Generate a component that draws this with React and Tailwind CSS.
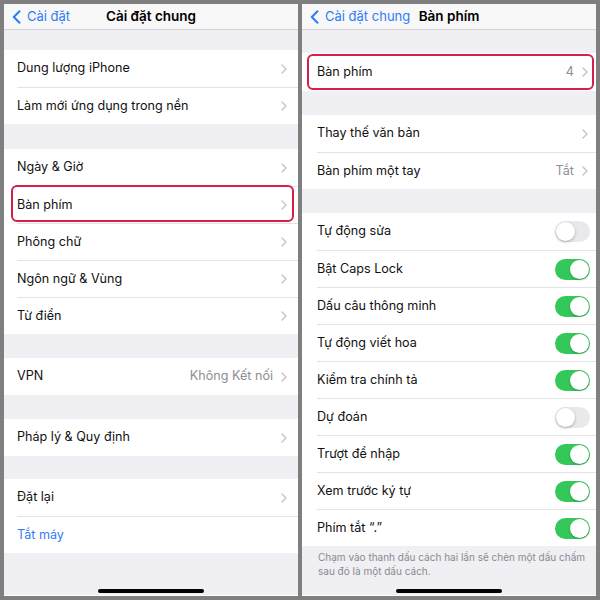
import React from 'react';

const font = { fontFamily: 'Inter, "Noto Sans", sans-serif' };

function Chevron() {
  return (
    <svg width="6" height="10" viewBox="0 0 6 10" className="shrink-0">
      <path d="M1 1l4 4-4 4" fill="none" stroke="#c4c4c7" strokeWidth="1.4" strokeLinecap="round" strokeLinejoin="round" />
    </svg>
  );
}

function BackChevron() {
  return (
    <svg width="9" height="14" viewBox="0 0 9 14" className="shrink-0">
      <path d="M7.5 1.2L1.8 7l5.7 5.8" fill="none" stroke="#2f7cf6" strokeWidth="2" strokeLinecap="round" strokeLinejoin="round" />
    </svg>
  );
}

function Toggle({ on }) {
  return on ? (
    <div className="w-[35px] h-[21px] rounded-full bg-[#34c759] flex items-center justify-end pr-[1px] shrink-0">
      <div className="w-[19px] h-[19px] rounded-full bg-white shadow-[0_1px_2px_rgba(0,0,0,0.25)]" />
    </div>
  ) : (
    <div className="w-[35px] h-[21px] rounded-full bg-[#e9e9eb] flex items-center pl-[1px] shrink-0">
      <div className="w-[19px] h-[19px] rounded-full bg-white shadow-[0_1px_3px_rgba(0,0,0,0.3)]" />
    </div>
  );
}

function Row({ label, value, chevron = true, toggle, first, inset, blue, highlight, h = 'h-[37px]', pr = 'pr-[11px]' }) {
  return (
    <div className={`relative ${h} flex`} style={{ paddingLeft: inset }}>
      <div className={`flex-1 flex items-center ${pr} ${first ? '' : 'border-t border-[#e3e3e6]'}`}>
        <span className={`flex-1 text-[12.6px] ${blue ? 'text-[#2f7cf6]' : 'text-[#111]'}`}>{label}</span>
        {value && <span className="text-[12.6px] text-[#8e8e93] mr-[8px]">{value}</span>}
        {toggle !== undefined ? <Toggle on={toggle} /> : chevron && <Chevron />}
      </div>
      {highlight}
    </div>
  );
}

function Nav({ back, title }) {
  return (
    <div className="relative h-[26px] bg-[#f8f8f8] border-b border-[#d4d4d8] flex items-center shrink-0">
      <div className="flex items-center gap-[6px] pl-[8px] text-[13px] text-[#2f7cf6] z-10">
        <BackChevron />
        <span>{back}</span>
      </div>
      <div className="absolute inset-0 flex items-center justify-center text-[13.5px] font-semibold text-black">{title}</div>
    </div>
  );
}

function Group({ children }) {
  return <div className="bg-white">{children}</div>;
}

function HomeBar() {
  return (
    <div className="mt-auto flex justify-center pb-[2px]">
      <div className="w-[106px] h-[4px] rounded-full bg-black" />
    </div>
  );
}

function LeftPanel() {
  const ins = 13;
  return (
    <div className="w-[294px] h-[592px] bg-[#efeff4] flex flex-col border-b border-white">
      <Nav back="Cài đặt" title="Cài đặt chung" />
      <div className="h-[20px]" />
      <Group>
        <Row first inset={ins} label="Dung lượng iPhone" />
        <Row inset={ins} label="Làm mới ứng dụng trong nền" />
      </Group>
      <div className="h-[25px]" />
      <Group>
        <Row first inset={ins} label="Ngày & Giờ" />
        <Row
          inset={ins}
          label="Bàn phím"
          highlight={<div className="absolute left-[7px] right-[4px] top-[-1px] bottom-[1px] border-2 border-[#d81e48] rounded-[6px]" />}
        />
        <Row inset={ins} label="Phông chữ" />
        <Row inset={ins} label="Ngôn ngữ & Vùng" />
        <Row inset={ins} label="Từ điển" />
      </Group>
      <div className="h-[24px]" />
      <Group>
        <Row first inset={ins} label="VPN" value="Không Kết nối" />
      </Group>
      <div className="h-[24px]" />
      <Group>
        <Row first inset={ins} label="Pháp lý & Quy định" />
      </Group>
      <div className="h-[23px]" />
      <Group>
        <Row first inset={ins} label="Đặt lại" />
        <Row inset={ins} label="Tắt máy" chevron={false} blue />
      </Group>
      <HomeBar />
    </div>
  );
}

function RightPanel() {
  const ins = 15;
  const pr = 'pr-[8px]';
  const tpr = 'pr-[6px]';
  const toggles = [
    ['Tự động sửa', false],
    ['Bật Caps Lock', true],
    ['Dấu câu thông minh', true],
    ['Tự động viết hoa', true],
    ['Kiểm tra chính tả', true],
    ['Dự đoán', false],
    ['Trượt để nhập', true],
    ['Xem trước ký tự', true],
    ['Phím tắt “.”', true],
  ];
  return (
    <div className="w-[294px] h-[592px] bg-[#efeff4] flex flex-col border-b border-white">
      <Nav back="Cài đặt chung" title="Bàn phím" />
      <div className="h-[23px]" />
      <Group>
        <Row
          first
          inset={ins}
          pr={pr}
          h="h-[38px]"
          label="Bàn phím"
          value="4"
          highlight={<div className="absolute left-[5px] right-[2px] top-[1px] bottom-[1px] border-2 border-[#d81e48] rounded-[6px]" />}
        />
      </Group>
      <div className="h-[24px]" />
      <Group>
        <Row first inset={ins} pr={pr} label="Thay thế văn bản" />
        <Row inset={ins} pr={pr} label="Bàn phím một tay" value="Tắt" />
      </Group>
      <div className="h-[24px]" />
      <Group>
        {toggles.map(([l, on], i) => (
          <Row key={l} first={i === 0} inset={ins} pr={tpr} label={l} toggle={on} />
        ))}
      </Group>
      <p className="pl-[16px] pr-[4px] pt-[4px] text-[10px] leading-[14px] text-[#8a8a8e]">
        Chạm vào thanh dấu cách hai lần sẽ chèn một dấu chấm sau đó là một dấu cách.
      </p>
      <HomeBar />
    </div>
  );
}

export default function App() {
  return (
    <div className="w-[600px] h-[600px] bg-[#7f7f7f] p-[4px] flex gap-[4px]" style={font}>
      <LeftPanel />
      <RightPanel />
    </div>
  );
}
